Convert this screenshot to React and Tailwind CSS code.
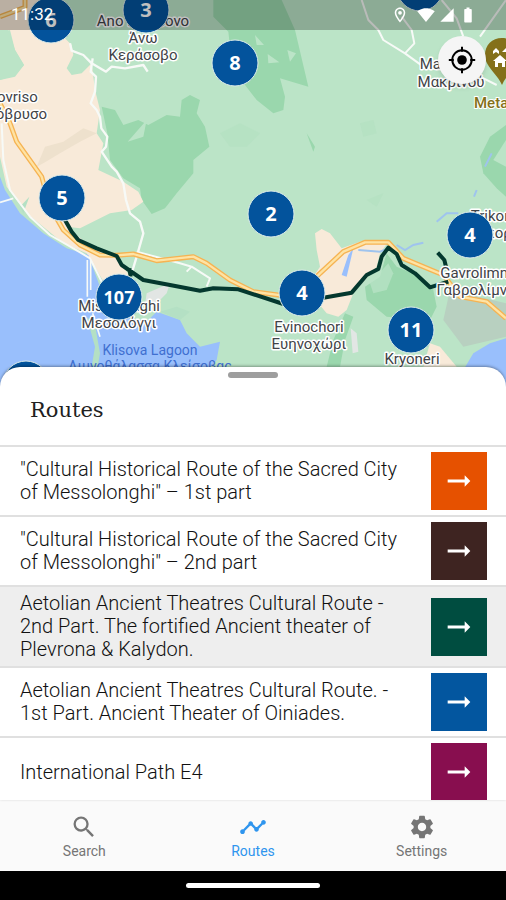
import React, { useState } from "react";
import {
  MdArrowRightAlt,
  MdBatteryFull,
  MdOutlineLocationOn,
  MdSearch,
  MdSettings,
  MdSignalCellular4Bar,
  MdSignalWifi4Bar,
  MdTimeline,
} from "react-icons/md";

const ROUTES = [
  {
    id: "messolonghi-1",
    title: '"Cultural Historical Route of the Sacred City of Messolonghi" – 1st part',
    tile: "bg-[#e65100]",
  },
  {
    id: "messolonghi-2",
    title: '"Cultural Historical Route of the Sacred City of Messolonghi" – 2nd part',
    tile: "bg-[#3e2421]",
  },
  {
    id: "theatres-2",
    title:
      "Aetolian Ancient Theatres Cultural Route - 2nd Part. The fortified Ancient theater of Plevrona & Kalydon.",
    tile: "bg-[#004d40]",
  },
  {
    id: "theatres-1",
    title:
      "Aetolian Ancient Theatres Cultural Route. - 1st Part. Ancient Theater of Oiniades.",
    tile: "bg-[#03569f]",
  },
  {
    id: "e4",
    title: "International Path E4",
    tile: "bg-[#880e4f]",
  },
];

const TABS = [
  { id: "search", label: "Search", Icon: MdSearch },
  { id: "routes", label: "Routes", Icon: MdTimeline },
  { id: "settings", label: "Settings", Icon: MdSettings },
];

const PLACES = [
  { x: 143, y: 26, text: "Ano Kerasovo" },
  { x: 143, y: 43, text: "Άνω" },
  { x: 143, y: 60, text: "Κεράσοβο" },
  { x: 8, y: 102, text: "Neovriso" },
  { x: 12, y: 119, text: "Νεόβρυσο" },
  { x: 119, y: 311, text: "Missolonghi" },
  { x: 119, y: 328, text: "Μεσολόγγι" },
  { x: 309, y: 332, text: "Evinochori" },
  { x: 309, y: 349, text: "Ευηνοχώρι" },
  { x: 412, y: 364, text: "Kryoneri" },
  { x: 451, y: 69, text: "Makrinou" },
  { x: 451, y: 87, text: "Μακρινού" },
  { x: 497, y: 221, text: "Trikorfo" },
  { x: 498, y: 238, text: "Τρίκορφο" },
  { x: 476, y: 278, text: "Gavrolimni" },
  { x: 476, y: 295, text: "Γαβρολίμνη" },
];

const CLUSTERS = [
  { x: 51, y: 20, count: "6" },
  { x: 146, y: 10, count: "3" },
  { x: 420, y: -12, count: "" },
  { x: 235, y: 63, count: "8" },
  { x: 62, y: 198, count: "5" },
  { x: 271, y: 214, count: "2" },
  { x: 470, y: 235, count: "4" },
  { x: 119, y: 297, count: "107" },
  { x: 302, y: 293, count: "4" },
  { x: 411, y: 330, count: "11" },
  { x: 26, y: 384, count: "" },
];

const MOTORWAY =
  "M0 50L75 22V0M0 310L30 370L50 425L125 530L150 620L190 690L240 735L300 765L350 766L400 762L470 782L580 770L620 790L690 840L760 875L850 887L900 880L960 820L1030 755L1095 727H1165L1210 775L1330 825L1380 890L1460 905L1518 955";

// Land, water and roads, drawn on a grid three times finer than the labels
function Terrain() {
  return (
    <svg x="0" y="0" width="506" height="387" viewBox="0 0 1518 1161" fill="none">
      <rect width="1518" height="1161" fill="#bbe4c7" />

      {/* forest */}
      <g fill="#9ad7ad">
        <path d="M640 0H845L885 90L925 260L840 235L855 290L850 330L820 340L770 300L735 255L700 230L685 95L640 50Z" />
        <path d="M305 320L345 330L370 375L415 360L445 375L500 345L540 350L545 300L570 285L600 300L590 340L615 380L628 440L580 480V520L530 580L495 625L455 642L425 600L420 565L370 535L330 480L322 400Z" />
        <path d="M1518 375L1470 410L1440 470L1450 520L1490 565L1518 590Z" />
        <path d="M1160 760L1190 800L1250 825L1300 870L1310 920L1290 960L1160 950L1100 900L1095 860L1140 830Z" />
        <path d="M1035 940L1060 950L1035 1020L1020 1100H980L1000 1020Z" />
        <path d="M920 400L945 440L940 455Z" />
      </g>
      <g fill="#bbe4c7">
        <path d="M310 310L360 260L370 275L330 320Z" />
        <path d="M383 425L440 360L430 410Z" />
        <path d="M765 105L792 135L770 135ZM803 162L838 187L805 190ZM862 150L888 160L870 185Z" />
        <path d="M1480 480L1518 420V500Z" />
        <path d="M1110 850L1165 790L1180 820L1160 870L1120 880Z" opacity=".7" />
      </g>
      <path
        d="M1080 370L1120 360L1130 400L1090 410ZM660 400L720 370L780 400L740 440L690 440ZM1100 600L1150 580L1130 620Z"
        fill="#b2e0c0"
        opacity=".5"
      />

      {/* lowland */}
      <g fill="#f8ead9">
        <path d="M30 90H170L215 135L220 165L200 205L215 225L245 220L275 190L285 270L300 330L290 400L310 430L295 510L370 545L415 575L430 605L395 630L330 640L240 685L200 680L260 730L350 770L390 830L320 860L260 760L190 730L80 640L20 560L0 470V240L45 230L72 195L45 150Z" />
        <path d="M0 0H190L215 90H30L0 100Z" />
        <path d="M945 700L965 687L990 700L1025 745L1080 725H1165L1140 760L1130 800L1060 880L1040 930L1015 950L980 940L930 880L940 830L960 800L950 750Z" />
        <path d="M1290 1030L1320 1040L1370 1100H1270Z" />
      </g>
      <path d="M0 90H25L45 150L72 195L45 225L0 240Z" fill="#bbe4c7" />
      <path
        d="M110 500L135 440L190 425L250 385L290 400L240 425L180 460L130 490Z"
        fill="#eee1cd"
      />
      <path d="M1350 870L1518 910V1010L1390 1040L1330 960Z" fill="#b8d0c0" />
      <path d="M440 880L510 850L500 880L430 950ZM1052 985L1070 1000L1075 1055L1058 1060Z" fill="#e2e6e4" />

      {/* sea and lagoon */}
      <g fill="#99bffc">
        <path d="M0 530L15 570L60 640L130 700L200 745L265 765L300 860L330 940L440 965L470 935L540 960L560 1000L600 1040L660 1025L650 1080L580 1161H0Z" />
        <path d="M1518 1015L1470 1030L1420 1060L1360 1161H1518Z" />
        <path d="M1045 765L1060 745L1040 830L1025 825Z" />
      </g>
      <g fill="#b4e0c4">
        <path d="M260 950L285 975L300 1060L290 1120L275 1100L285 1040Z" />
        <path d="M480 935L530 920L570 935L540 960Z" />
        <path d="M88 590L70 640L60 620Z" />
      </g>
      <path
        d="M1075 750L1140 755L1165 745M1190 735L1215 750L1240 735L1270 728M1310 665L1340 640L1375 640M1475 460L1455 500M1430 570L1422 590"
        stroke="#9fc4ee"
        strokeWidth="6"
      />

      {/* minor roads */}
      <g stroke="#f7faf7" strokeLinejoin="round">
        <path
          d="M210 130L215 152L250 165L275 190L318 215L335 200L375 205L430 195L443 215"
          strokeWidth="7"
        />
        <path
          d="M278 175L272 215L288 230L285 275L272 310L290 330L300 350L304 385L322 410L318 440L305 455L335 500L350 515L370 550L378 600L390 640L420 665L430 700L410 770L395 820"
          strokeWidth="7"
        />
        <path d="M5 370L10 480L30 570L90 650L150 705L220 745L270 775L310 855" strokeWidth="6" />
        <path d="M0 607L40 595M262 780V890M272 780V870M278 940L300 1010" strokeWidth="5" />
        <path d="M410 755L540 790L575 800L630 835L620 860M575 800L560 815" strokeWidth="6" />
        <path
          d="M1085 0L1105 60L1135 90L1150 120L1215 160L1270 200M1215 160L1243 130L1235 90L1205 50M1325 0L1370 55L1390 110M1518 0L1440 110M1440 230L1490 255"
          strokeWidth="6"
        />
      </g>

      {/* motorway */}
      <g strokeLinejoin="round">
        <path d={MOTORWAY} stroke="#f6b352" strokeWidth="15" />
        <path d={MOTORWAY} stroke="#fee3a4" strokeWidth="7" />
      </g>

      {/* selected route */}
      <path
        d="M195 660L215 695L235 720L290 745L350 768L365 795L430 840L510 855L600 872L640 865L715 868L850 912M970 893L1055 878L1100 825L1135 807L1145 770L1165 743L1190 762L1205 795L1245 820L1290 862L1345 845M1313 758L1333 780L1338 800M388 805L392 830"
        stroke="#04382e"
        strokeWidth="12"
        strokeLinejoin="round"
      />
    </svg>
  );
}

function Cluster({ x, y, count }) {
  return (
    <g>
      <circle cx={x} cy={y} r="23" fill="#03539c" stroke="#dcebea" strokeWidth="1" />
      <text
        x={x}
        y={y + 7}
        textAnchor="middle"
        fill="#ffffff"
        className={`font-['Open_Sans',sans-serif] font-bold ${count.length > 2 ? "text-[18px]" : "text-[20px]"}`}
      >
        {count}
      </text>
    </g>
  );
}

function RouteMap() {
  return (
    <svg
      viewBox="0 0 506 387"
      preserveAspectRatio="xMinYMin slice"
      className="block h-full w-full"
      role="img"
      aria-label="Map of routes around Messolonghi"
    >
      <Terrain />
      <g
        textAnchor="middle"
        fill="#3f4347"
        stroke="#ffffff"
        strokeWidth="3"
        strokeLinejoin="round"
        className="text-[15px] [paint-order:stroke]"
      >
        {PLACES.map((place) => (
          <text key={place.text} x={place.x} y={place.y}>
            {place.text}
          </text>
        ))}
      </g>
      <g textAnchor="middle" fill="#3f6fd0" className="text-[14px]">
        <text x="150" y="355">Klisova Lagoon</text>
        <text x="150" y="371">Λιμνοθάλασσα Κλείσοβας</text>
      </g>

      {/* museum pin */}
      <path d="M502 38c-10 0-17 7-17 17 0 12 12 18 17 30 5-12 17-18 17-30 0-10-7-17-17-17z" fill="#84701a" />
      <path
        d="M493 61l7-6 7 6h-2v6h-3v-4h-4v4h-3v-6zM493 54v-3l3-3 3 3v3l-3-2zM502 52l4-4 4 4v3l-4-3z"
        fill="#ffffff"
      />
      <text
        x="474"
        y="108"
        fill="#84701a"
        stroke="#ffffff"
        strokeWidth="2"
        className="text-[15px] font-medium [paint-order:stroke]"
      >
        Metamorfosi
      </text>

      {CLUSTERS.map((cluster) => (
        <Cluster key={`${cluster.x}-${cluster.y}`} {...cluster} />
      ))}
    </svg>
  );
}

function CrosshairIcon() {
  return (
    <svg viewBox="0 0 28 28" className="size-7" fill="none" stroke="currentColor" strokeWidth="2">
      <circle cx="14" cy="14" r="9.7" />
      <circle cx="14" cy="14" r="4.8" fill="currentColor" stroke="none" />
      <path d="M14 .8v5M14 22.2v5M.8 14h5M22.2 14h5" />
    </svg>
  );
}

function StatusBar() {
  return (
    <div className="absolute inset-x-0 top-0 flex h-[30px] items-center justify-between bg-black/25 pr-[29px] pl-[11px] text-white">
      <span className="text-[17px]">11:32</span>
      <span className="flex items-center gap-1">
        <MdOutlineLocationOn size={18} className="mr-1" />
        <MdSignalWifi4Bar size={18} />
        <MdSignalCellular4Bar size={16} />
        <MdBatteryFull size={18} />
      </span>
    </div>
  );
}

function RouteRow({ route, selected, onSelect }) {
  return (
    <li
      className={`flex items-center border-t-2 border-[#e0e0e0] py-[5px] pr-[19px] pl-5 ${selected ? "bg-[#eeeeee]" : "bg-white"}`}
    >
      <p className="flex-1 pr-6 text-[20px] leading-[23px] font-light text-[#111111]">
        {route.title}
      </p>
      <button
        type="button"
        aria-label={`Open ${route.title}`}
        onClick={() => onSelect(route.id)}
        className={`flex h-[58px] w-14 shrink-0 items-center justify-center text-white ${route.tile}`}
      >
        <MdArrowRightAlt size={34} />
      </button>
    </li>
  );
}

export default function App() {
  const [selectedRoute, setSelectedRoute] = useState("theatres-2");
  const [activeTab, setActiveTab] = useState("routes");

  return (
    <div className="flex h-screen flex-col overflow-hidden bg-white font-[Roboto,'Noto_Sans',sans-serif]">
      <div className="relative h-[43vh] shrink-0 overflow-hidden">
        <RouteMap />
        <StatusBar />
        <button
          type="button"
          aria-label="My location"
          className="absolute top-9 right-5 flex size-12 items-center justify-center rounded-full bg-[#f5f5f5] text-black shadow-md"
        >
          <CrosshairIcon />
        </button>
      </div>

      <section className="relative -mt-5 flex min-h-0 flex-1 flex-col rounded-t-[20px] bg-white shadow-[0_-1px_3px_rgba(0,0,0,0.35)]">
        <div className="mx-auto mt-[5px] h-[6px] w-[50px] shrink-0 rounded-full bg-[#9e9e9e]" />
        <h1 className="shrink-0 px-[30px] pt-4 pb-[19px] font-['DejaVu_Serif',serif] text-[21px] leading-8 text-[#212121]">
          Routes
        </h1>
        <ul className="min-h-0 flex-1 overflow-y-auto [scrollbar-width:none]">
          {ROUTES.map((route) => (
            <RouteRow
              key={route.id}
              route={route}
              selected={route.id === selectedRoute}
              onSelect={setSelectedRoute}
            />
          ))}
        </ul>
      </section>

      <nav className="flex h-[71px] shrink-0 bg-[#fafafa]">
        {TABS.map(({ id, label, Icon }) => (
          <button
            key={id}
            type="button"
            onClick={() => setActiveTab(id)}
            className={`flex flex-1 flex-col items-center justify-center pt-0.5 text-[14px] leading-5 ${id === activeTab ? "text-[#2f95ee]" : "text-[#757575]"}`}
          >
            <Icon size={28} />
            {label}
          </button>
        ))}
      </nav>

      <div className="flex h-[29px] shrink-0 items-center justify-center bg-black">
        <div className="h-[5px] w-[134px] rounded-full bg-white" />
      </div>
    </div>
  );
}
